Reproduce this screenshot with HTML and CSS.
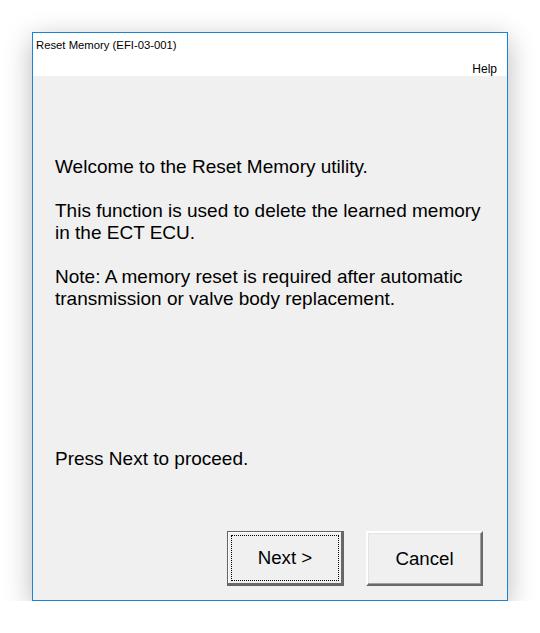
FILE: index.html
```html
<!DOCTYPE html>
<html>
<head>
<meta charset="utf-8">
<link rel="stylesheet" href="styles.css">
</head>
<body>
<div class="window">
  <div class="titlebar">
    <div class="title">Reset Memory (EFI-03-001)</div>
    <div class="menu">Help</div>
  </div>
  <div class="content">
    <div class="message">
      <p>Welcome to the Reset Memory utility.</p>
      <p>This function is used to delete the learned memory<br>in the ECT ECU.</p>
      <p>Note: A memory reset is required after automatic<br>transmission or valve body replacement.</p>
    </div>
    <p class="proceed">Press Next to proceed.</p>
    <div class="buttons">
      <button class="btn default"><span class="focus">Next &gt;</span></button>
      <button class="btn">Cancel</button>
    </div>
  </div>
</div>
</body>
</html>
```
FILE: styles.css
```css
html, body {
  margin: 0;
  padding: 0;
  background: #ffffff;
}
body {
  padding: 32px 0 0 32px;
  font-family: "Liberation Sans", Arial, sans-serif;
}
.window {
  width: 474px;
  height: 567px;
  border: 1px solid #1883d7;
  background: #f0f0f0;
  display: flex;
  flex-direction: column;
  box-shadow: 0 7px 26px rgba(0, 0, 0, 0.28);
}
.titlebar {
  height: 43px;
  background: #ffffff;
  display: flex;
  flex-direction: column;
  flex: none;
}
.title {
  font-size: 11.3px;
  color: #000;
  padding: 5px 0 0 3px;
  line-height: 14px;
}
.menu {
  font-size: 12px;
  color: #000;
  align-self: flex-end;
  padding: 10px 10px 0 0;
  line-height: 14px;
}
.content {
  flex: 1;
  display: flex;
  flex-direction: column;
  padding: 80px 0 0 22px;
  font-size: 19px;
  line-height: 22px;
  color: #000;
}
.message p {
  margin: 0 0 22px 0;
}
.message {
  flex: 1;
}
.proceed {
  margin: 0 0 61px 0;
}
.buttons {
  display: flex;
  justify-content: flex-end;
  gap: 22px;
  padding: 0 24px 14px 0;
}
.btn {
  box-sizing: border-box;
  width: 117px;
  height: 55px;
  font-family: "Liberation Sans", Arial, sans-serif;
  font-size: 18.7px;
  color: #000;
  background: #f0f0f0;
  border: 2px solid;
  border-color: #ffffff #696969 #696969 #ffffff;
  box-shadow: inset -1px -1px 0 #a0a0a0, inset 1px 1px 0 #e3e3e3;
  padding: 0;
  margin: 0;
  display: flex;
  align-items: center;
  justify-content: center;
}
.btn.default {
  border: 1px solid #646464;
  box-shadow: inset -2px -2px 0 #696969, inset 1px 1px 0 #ffffff;
  padding: 3px 4px 4px 3px;
}
.focus {
  flex: 1;
  align-self: stretch;
  display: flex;
  align-items: center;
  justify-content: center;
  border: 1px dotted #000;
}
```
